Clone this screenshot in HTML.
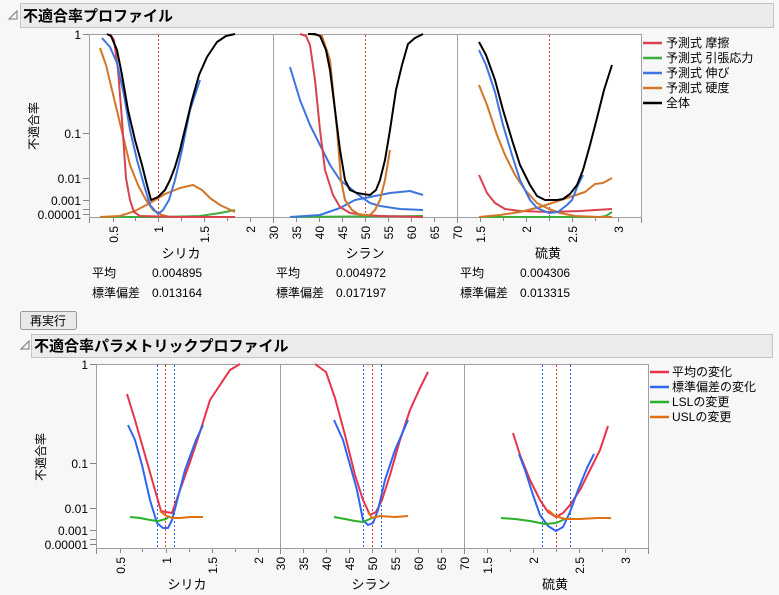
<!DOCTYPE html>
<html><head><meta charset="utf-8"><style>
body{margin:0;background:#f7f7f7;}
svg{display:block;font-family:"Liberation Sans","Noto Sans CJK JP",sans-serif;}
</style></head><body>
<svg width="779" height="595" viewBox="0 0 779 595" xmlns="http://www.w3.org/2000/svg">
<rect width="779" height="595" fill="#f7f7f7"/>
<!-- header 1 -->
<rect x="20.5" y="3.5" width="753" height="24" fill="#ebebeb" stroke="#c4c4c4"/>
<path d="M9 19 L17 11 L17 19 Z" fill="none" stroke="#777" stroke-width="1"/>
<text x="23" y="21" font-size="15" font-weight="bold" fill="#000">不適合率プロファイル</text>
<!-- plot 1 -->
<rect x="89.5" y="34.5" width="552" height="183" fill="#fff" stroke="#a0a0a0"/>
<line x1="273.5" y1="34" x2="273.5" y2="218" stroke="#a0a0a0"/>
<line x1="457.5" y1="34" x2="457.5" y2="218" stroke="#a0a0a0"/>
<g font-size="12" fill="#000" text-anchor="end">
<text x="81" y="39">1</text><text x="81" y="138">0.1</text><text x="81" y="183">0.01</text><text x="81" y="205">0.001</text><text x="81" y="219">0.00001</text>
</g>
<g stroke="#888"><line x1="83" y1="34.5" x2="89" y2="34.5"/><line x1="83" y1="133.5" x2="89" y2="133.5"/><line x1="83" y1="178.5" x2="89" y2="178.5"/><line x1="83" y1="200.5" x2="89" y2="200.5"/><line x1="83" y1="209.5" x2="89" y2="209.5"/><line x1="83" y1="214.5" x2="89" y2="214.5"/></g>
<text transform="translate(38,126) rotate(-90)" font-size="12" text-anchor="middle">不適合率</text>
<g stroke="#888">
<path d="M89.5 218v5M113.5 218v4M135.5 218v3M158.5 218v4M181.5 218v3M204.5 218v4M227.5 218v3M250.5 218v4M273.5 218v5M296.5 218v4M319.5 218v4M342.5 218v4M365.5 218v4M388.5 218v4M411.5 218v4M434.5 218v4M457.5 218v5M480.5 218v4M503.5 218v3M526.5 218v4M549.5 218v3M572.5 218v4M595.5 218v3M618.5 218v4M641.5 218v5"/>
</g>
<g font-size="12" text-anchor="end">
<text transform="translate(118,226) rotate(-90)">0.5</text>
<text transform="translate(163,226) rotate(-90)">1</text>
<text transform="translate(209,226) rotate(-90)">1.5</text>
<text transform="translate(255,226) rotate(-90)">2</text>
<text transform="translate(278,226) rotate(-90)">30</text>
<text transform="translate(301,226) rotate(-90)">35</text>
<text transform="translate(324,226) rotate(-90)">40</text>
<text transform="translate(347,226) rotate(-90)">45</text>
<text transform="translate(370,226) rotate(-90)">50</text>
<text transform="translate(393,226) rotate(-90)">55</text>
<text transform="translate(416,226) rotate(-90)">60</text>
<text transform="translate(439,226) rotate(-90)">65</text>
<text transform="translate(462,226) rotate(-90)">70</text>
<text transform="translate(485,226) rotate(-90)">1.5</text>
<text transform="translate(531,226) rotate(-90)">2</text>
<text transform="translate(577,226) rotate(-90)">2.5</text>
<text transform="translate(623,226) rotate(-90)">3</text>
</g>
<g font-size="13" text-anchor="middle"><text x="181" y="258">シリカ</text><text x="365" y="258">シラン</text><text x="548" y="258">硫黄</text></g>
<g font-size="12">
<text x="92" y="277">平均</text><text x="152" y="277">0.004895</text>
<text x="92" y="297">標準偏差</text><text x="152" y="297">0.013164</text>
<text x="276" y="277">平均</text><text x="336" y="277">0.004972</text>
<text x="276" y="297">標準偏差</text><text x="336" y="297">0.017197</text>
<text x="460" y="277">平均</text><text x="520" y="277">0.004306</text>
<text x="460" y="297">標準偏差</text><text x="520" y="297">0.013315</text>
</g>
<g stroke="#e03030" stroke-dasharray="2,2" stroke-width="1"><line x1="158.5" y1="35" x2="158.5" y2="217"/><line x1="365.5" y1="35" x2="365.5" y2="217"/><line x1="549.5" y1="35" x2="549.5" y2="217"/></g>
<g fill="none" stroke-width="2" stroke-linejoin="round">
<!-- panel1 -->
<polyline stroke="#3cae3c" points="100,217 160,217 200,216 220,213 235,210"/>
<polyline stroke="#d2762a" points="100,217 120,216 135,211 150,203 165,194 180,188 193,185 202,190 210,198 220,205 235,212"/>
<polyline stroke="#d2762a" points="100,48 106,65 112,90 118,115 124,140 130,165 138,185 146,200 153,210 162,215 170,217 235,217"/>
<polyline stroke="#d9424f" points="110,34 114,40 118,70 122,120 126,178 130,200 134,212 140,216 180,217 235,217"/>
<polyline stroke="#3f74e0" points="102,38 110,47 117,63 124,95 130,130 137,160 144,185 150,205 158,214 163,210 169,200 175,180 182,150 190,110 200,80"/>
<polyline stroke="#000" points="107,34 111,36 117,50 122,75 128,110 135,140 142,165 147,185 151,200 158,197 165,190 170,180 175,167 180,150 186,125 192,100 199,75 207,57 217,42 226,36 235,34"/>
<!-- panel2 -->
<polyline stroke="#3cae3c" points="290,217 423,216"/>
<polyline stroke="#3f74e0" points="290,217 320,215 340,208 355,200 365,198 375,196 390,193 410,191 423,195"/>
<polyline stroke="#3f74e0" points="290,67 300,100 310,125 320,145 330,165 340,180 350,188 360,196 370,203 380,206 400,209 423,210"/>
<polyline stroke="#d9424f" points="300,34 306,36 310,45 315,80 320,130 325,170 333,195 340,207 350,213 365,215 380,216 423,217"/>
<polyline stroke="#d2762a" points="310,34 322,36 330,60 337,130 341,180 345,200 352,210 360,215 370,215 375,210 380,200 385,180 390,150"/>
<polyline stroke="#000" points="308,34 315,34 320,36 326,50 330,70 335,110 340,150 345,180 350,190 357,193 363,194 370,195 376,190 380,180 385,160 390,130 396,90 402,65 408,44 415,38 423,34"/>
<!-- panel3 -->
<polyline stroke="#3cae3c" points="479,217 600,217 606,216 612,212"/>
<polyline stroke="#d9424f" points="479,175 487,193 495,203 505,209 520,211 549,212 580,211 612,209"/>
<polyline stroke="#d2762a" points="479,217 500,215 520,212 540,207 555,202 570,197 585,192 595,184 603,183 612,178"/>
<polyline stroke="#d2762a" points="479,85 487,105 497,135 505,155 515,175 525,190 537,203 549,209 560,213 575,216 600,217 612,217"/>
<polyline stroke="#3f74e0" points="479,50 486,65 495,92 503,125 512,155 520,180 530,200 537,208 549,213 558,212 567,205 572,200 578,185 583,175"/>
<polyline stroke="#000" points="479,42 486,55 495,80 503,110 512,140 520,165 530,185 537,196 545,200 557,200 563,199 570,194 577,185 583,170 590,145 597,118 604,90 612,65"/>
</g>
<!-- legend 1 -->
<g stroke-width="2.5">
<line x1="643" y1="43" x2="662" y2="43" stroke="#d9424f"/>
<line x1="643" y1="58" x2="662" y2="58" stroke="#3cae3c"/>
<line x1="643" y1="73" x2="662" y2="73" stroke="#3f74e0"/>
<line x1="643" y1="88" x2="662" y2="88" stroke="#d2762a"/>
<line x1="643" y1="103" x2="662" y2="103" stroke="#000"/>
</g>
<g font-size="12"><text x="666" y="47">予測式 摩擦</text><text x="666" y="62">予測式 引張応力</text><text x="666" y="77">予測式 伸び</text><text x="666" y="92">予測式 硬度</text><text x="666" y="107">全体</text></g>
<!-- button -->
<rect x="20.5" y="311.5" width="56" height="18" rx="2" fill="#e9e9e9" stroke="#999"/>
<text x="48" y="325" font-size="12" text-anchor="middle">再実行</text>
<!-- header 2 -->
<rect x="31.5" y="334.5" width="741" height="23" fill="#ebebeb" stroke="#c4c4c4"/>
<path d="M21 349 L29 341 L29 349 Z" fill="none" stroke="#777"/>
<text x="34" y="351" font-size="15" font-weight="bold">不適合率パラメトリックプロファイル</text>
<!-- plot 2 -->
<rect x="96.5" y="364.5" width="552" height="184" fill="#fff" stroke="#a0a0a0"/>
<line x1="280.5" y1="364" x2="280.5" y2="549" stroke="#a0a0a0"/>
<line x1="464.5" y1="364" x2="464.5" y2="549" stroke="#a0a0a0"/>
<g font-size="12" text-anchor="end">
<text x="88" y="369">1</text><text x="88" y="468">0.1</text><text x="88" y="513">0.01</text><text x="88" y="535">0.001</text><text x="88" y="549">0.00001</text>
</g>
<g stroke="#888"><line x1="90" y1="364.5" x2="96" y2="364.5"/><line x1="90" y1="463.5" x2="96" y2="463.5"/><line x1="90" y1="508.5" x2="96" y2="508.5"/><line x1="90" y1="530.5" x2="96" y2="530.5"/><line x1="90" y1="539.5" x2="96" y2="539.5"/><line x1="90" y1="544.5" x2="96" y2="544.5"/></g>
<text transform="translate(45,457) rotate(-90)" font-size="12" text-anchor="middle">不適合率</text>
<g stroke="#888">
<path d="M96.5 549v5M120.5 549v4M142.5 549v3M166.5 549v4M189.5 549v3M212.5 549v4M235.5 549v3M258.5 549v4M280.5 549v5M303.5 549v4M326.5 549v4M349.5 549v4M372.5 549v4M395.5 549v4M418.5 549v4M441.5 549v4M464.5 549v5M487.5 549v4M510.5 549v3M533.5 549v4M556.5 549v3M579.5 549v4M602.5 549v3M625.5 549v4M648.5 549v5"/>
</g>
<g font-size="12" text-anchor="end">
<text transform="translate(125,557) rotate(-90)">0.5</text>
<text transform="translate(171,557) rotate(-90)">1</text>
<text transform="translate(217,557) rotate(-90)">1.5</text>
<text transform="translate(263,557) rotate(-90)">2</text>
<text transform="translate(285,557) rotate(-90)">30</text>
<text transform="translate(308,557) rotate(-90)">35</text>
<text transform="translate(331,557) rotate(-90)">40</text>
<text transform="translate(354,557) rotate(-90)">45</text>
<text transform="translate(377,557) rotate(-90)">50</text>
<text transform="translate(400,557) rotate(-90)">55</text>
<text transform="translate(423,557) rotate(-90)">60</text>
<text transform="translate(446,557) rotate(-90)">65</text>
<text transform="translate(469,557) rotate(-90)">70</text>
<text transform="translate(492,557) rotate(-90)">1.5</text>
<text transform="translate(538,557) rotate(-90)">2</text>
<text transform="translate(584,557) rotate(-90)">2.5</text>
<text transform="translate(630,557) rotate(-90)">3</text>
</g>
<g font-size="13" text-anchor="middle"><text x="187" y="589">シリカ</text><text x="371" y="589">シラン</text><text x="555" y="589">硫黄</text></g>
<g stroke-dasharray="2,2" stroke-width="1">
<line x1="157.5" y1="365" x2="157.5" y2="548" stroke="#2a5ee8"/><line x1="174.5" y1="365" x2="174.5" y2="548" stroke="#2a5ee8"/><line x1="165.5" y1="365" x2="165.5" y2="548" stroke="#e03030"/>
<line x1="363.5" y1="365" x2="363.5" y2="548" stroke="#2a5ee8"/><line x1="381.5" y1="365" x2="381.5" y2="548" stroke="#2a5ee8"/><line x1="372.5" y1="365" x2="372.5" y2="548" stroke="#e03030"/>
<line x1="542.5" y1="365" x2="542.5" y2="548" stroke="#2a5ee8"/><line x1="570.5" y1="365" x2="570.5" y2="548" stroke="#2a5ee8"/><line x1="556.5" y1="365" x2="556.5" y2="548" stroke="#e03030"/>
</g>
<g fill="none" stroke-width="2" stroke-linejoin="round">
<polyline stroke="#e8334a" points="127,394 135,420 145,455 155,490 161,511 166,512 172,513 180,490 190,462 200,432 210,400 218,388 230,370 240,364"/>
<polyline stroke="#2f66f0" points="128,425 135,440 142,465 150,500 157,523 163,528 168,528 172,520 176,505 185,470 196,440 203,425"/>
<polyline stroke="#2ab02a" points="130,517 140,518 150,520 158,521 166,519 170,516"/>
<polyline stroke="#e07010" points="160,511 165,515 172,518 180,518 190,517 203,517"/>
<polyline stroke="#e8334a" points="315,364 326,372 335,398 345,435 355,475 363,500 370,515 376,512 382,500 390,475 400,440 410,410 420,388 428,372"/>
<polyline stroke="#2f66f0" points="334,420 343,440 350,465 357,490 363,520 368,525 373,523 378,510 385,480 395,450 408,420"/>
<polyline stroke="#2ab02a" points="334,517 345,519 355,521 363,522 372,518"/>
<polyline stroke="#e07010" points="368,512 372,518 380,516 395,517 408,516"/>
<polyline stroke="#e8334a" points="513,433 520,455 530,480 540,500 548,512 556,517 563,513 570,505 580,490 590,470 600,450 608,426"/>
<polyline stroke="#2f66f0" points="519,454 525,470 533,495 540,515 548,526 556,531 563,527 570,512 578,490 587,468 594,454"/>
<polyline stroke="#2ab02a" points="501,518 515,519 530,521 545,524 556,523 565,519"/>
<polyline stroke="#e07010" points="548,510 555,516 565,519 580,519 597,518 611,518"/>
</g>
<g stroke-width="2.5">
<line x1="650" y1="372" x2="669" y2="372" stroke="#e8334a"/>
<line x1="650" y1="387" x2="669" y2="387" stroke="#2f66f0"/>
<line x1="650" y1="402" x2="669" y2="402" stroke="#2ab02a"/>
<line x1="650" y1="417" x2="669" y2="417" stroke="#e07010"/>
</g>
<g font-size="12"><text x="672" y="376">平均の変化</text><text x="672" y="391">標準偏差の変化</text><text x="672" y="406">LSLの変更</text><text x="672" y="421">USLの変更</text></g>
</svg>
</body></html>
